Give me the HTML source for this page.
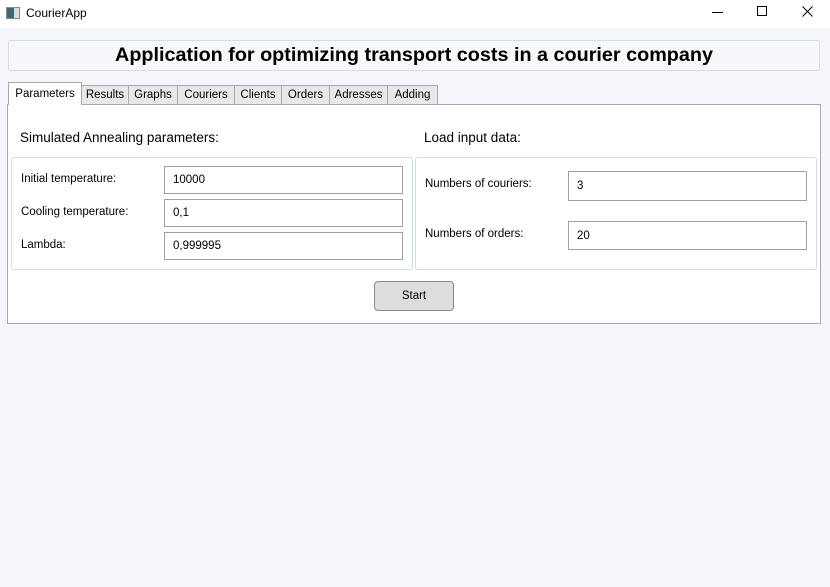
<!DOCTYPE html>
<html><head><style>
*{box-sizing:border-box;margin:0;padding:0}
body{width:830px;height:587px;background:#f5f6fb;font-family:"Liberation Sans",sans-serif;position:relative;overflow:hidden;color:#000}
.a{position:absolute}
.tb{left:0;top:0;width:830px;height:28px;background:#fff}
.tab{position:absolute;top:85px;height:20px;border:1px solid #a9a9a9;background:#e8e8e8;font-size:11.5px;text-align:center;line-height:18px}
.box{border:1px solid #d5dde6;border-radius:3px;background:#fff}
.in{position:absolute;border:1px solid #a0a0a0;background:#fff;font-size:11.5px;padding-left:8px;display:flex;align-items:center}
.lb{position:absolute;font-size:11.5px}
</style></head><body>
<div class="a tb"></div>
<div class="a" style="left:6px;top:7px;width:14px;height:12px;border:1px solid #888;background:linear-gradient(90deg,#3a6a7a 0 60%,#ddd 60%)"></div>
<div class="a" style="left:26px;top:6px;font-size:12px">CourierApp</div>
<div class="a" style="left:712px;top:12px;width:11px;height:1px;background:#000"></div>
<div class="a" style="left:757px;top:6px;width:10px;height:10px;border:1px solid #000"></div>
<svg class="a" style="left:802px;top:6px" width="11" height="11"><path d="M0.5 0.5L10.5 10.5M10.5 0.5L0.5 10.5" stroke="#000" stroke-width="1"/></svg>
<div class="a box" style="left:8px;top:40px;width:812px;height:31px;background:#f7f8fc"></div>
<div class="a" style="left:8px;top:44px;width:812px;text-align:center;font-size:19.8px;font-weight:bold">Application for optimizing transport costs in a courier company</div>
<div class="a" style="left:7px;top:104px;width:814px;height:220px;border:1px solid #a9a9a9;background:#fff"></div>
<div class="tab" style="left:8px;top:82px;width:74px;height:23px;background:#fff;border-bottom:none;line-height:22px">Parameters</div>
<div class="tab" style="left:81px;width:48px">Results</div>
<div class="tab" style="left:128px;width:50px">Graphs</div>
<div class="tab" style="left:177px;width:58px">Couriers</div>
<div class="tab" style="left:234px;width:48px">Clients</div>
<div class="tab" style="left:281px;width:49px">Orders</div>
<div class="tab" style="left:329px;width:59px">Adresses</div>
<div class="tab" style="left:387px;width:51px">Adding</div>
<div class="a" style="left:20px;top:130px;font-size:13.5px">Simulated Annealing parameters:</div>
<div class="a" style="left:424px;top:130px;font-size:13.5px">Load input data:</div>
<div class="a box" style="left:11px;top:157px;width:402px;height:113px"></div>
<div class="a box" style="left:415px;top:157px;width:402px;height:113px"></div>
<div class="lb" style="left:21px;top:173px">Initial temperature:</div>
<div class="lb" style="left:21px;top:206px">Cooling temperature:</div>
<div class="lb" style="left:21px;top:239px">Lambda:</div>
<div class="in" style="left:164px;top:166px;width:239px;height:28px">10000</div>
<div class="in" style="left:164px;top:199px;width:239px;height:28px">0,1</div>
<div class="in" style="left:164px;top:232px;width:239px;height:28px">0,999995</div>
<div class="lb" style="left:425px;top:178px">Numbers of couriers:</div>
<div class="lb" style="left:425px;top:228px">Numbers of orders:</div>
<div class="in" style="left:568px;top:171px;width:239px;height:30px">3</div>
<div class="in" style="left:568px;top:221px;width:239px;height:29px">20</div>
<div class="a" style="left:374px;top:281px;width:80px;height:30px;border:1px solid #8a8a8a;border-radius:4px;background:#dddddd;font-size:11.5px;text-align:center;line-height:29px">Start</div>
</body></html>
